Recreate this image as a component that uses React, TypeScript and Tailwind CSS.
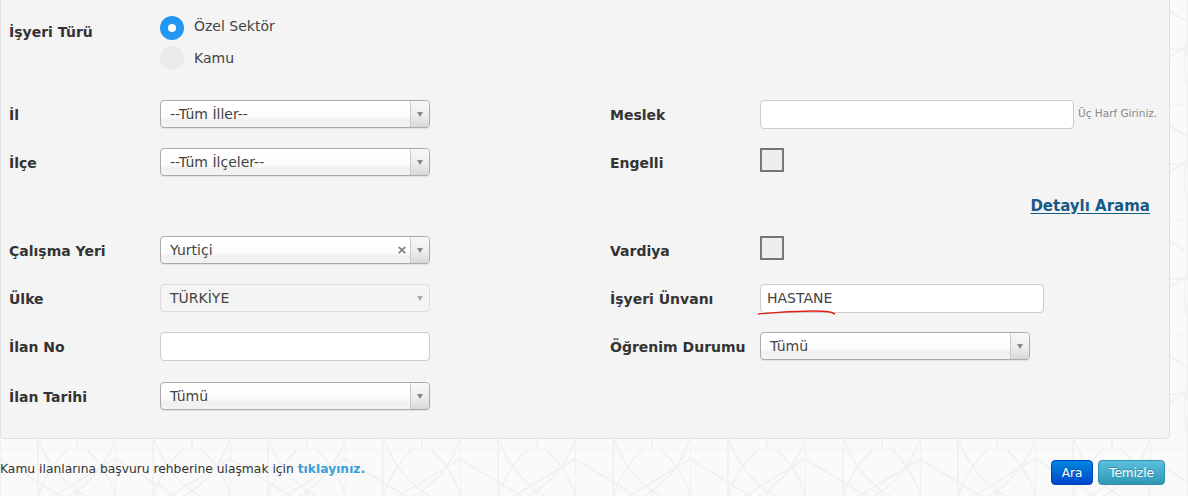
import React from "react";

const LABEL = "text-[14px] font-bold text-[#333] pt-[2px]";

function Arrow({ light }: { light?: boolean }) {
  return light ? (
    <span className="block h-0 w-0 border-x-[3.5px] border-t-[5px] border-x-transparent border-t-[#aaa]" />
  ) : (
    <span className="block h-0 w-0 border-x-[3.5px] border-t-[5px] border-x-transparent border-t-[#888]" />
  );
}

function Select({ value, wClass, clear }: { value: string; wClass: string; clear?: boolean }) {
  return (
    <div
      className={
        wClass +
        " flex h-[28px] shrink-0 items-stretch overflow-hidden rounded-[4px] border border-[#aaa] bg-[linear-gradient(#fff_20%,#fbfbfb_60%,#f0f0f0_75%,#f4f4f4_100%)] shadow-[0_1px_1px_rgba(0,0,0,0.08)]"
      }
    >
      <div className="flex flex-1 items-center pl-[9px] text-[14px] text-[#444]">{value}</div>
      {clear ? (
        <div className="flex w-[16px] items-center justify-center text-[13px] font-bold text-[#777]">×</div>
      ) : null}
      <div className="flex w-[19px] items-center justify-center border-l border-[#c8c8c8] bg-[linear-gradient(#f8f8f8_0%,#eee_55%,#d8d8d8_100%)]">
        <Arrow />
      </div>
    </div>
  );
}

function DisabledSelect({ value, wClass }: { value: string; wClass: string }) {
  return (
    <div className={wClass + " flex h-[28px] shrink-0 items-center rounded-[4px] border border-[#dcdcdc] bg-[#f4f4f4]"}>
      <div className="flex flex-1 items-center pl-[9px] text-[14px] text-[#444]">{value}</div>
      <div className="flex w-[19px] items-center justify-center">
        <Arrow light />
      </div>
    </div>
  );
}

function TextInput({ wClass, value }: { wClass: string; value?: string }) {
  return (
    <div className={wClass + " flex h-[29px] shrink-0 items-center rounded-[4px] border border-[#ccc] bg-white pl-[6px] text-[14px] text-[#444]"}>
      {value}
    </div>
  );
}

function Checkbox() {
  return <div className="mb-[5px] h-[24px] w-[24px] shrink-0 border-2 border-[#777] bg-[#eee]" />;
}

function Row({ h, left, right }: { h: string; left?: React.ReactNode; right?: React.ReactNode }) {
  return (
    <div className={h + " flex items-center"}>
      <div className="flex w-[601px] shrink-0 items-center">{left}</div>
      <div className="flex flex-1 items-center">{right}</div>
    </div>
  );
}

function LeftField({ label, children }: { label: string; children: React.ReactNode }) {
  return (
    <>
      <div className={"w-[151px] shrink-0 " + LABEL}>{label}</div>
      {children}
    </>
  );
}

function RightField({ label, children }: { label: string; children: React.ReactNode }) {
  return (
    <>
      <div className={"w-[150px] shrink-0 " + LABEL}>{label}</div>
      {children}
    </>
  );
}

export default function App() {
  return (
    <div className="relative h-[496px] w-[1188px] overflow-hidden bg-[#fafafa] font-['DejaVu_Sans',sans-serif]">
      <svg className="absolute inset-0 h-full w-full" aria-hidden="true">
        <defs>
          <pattern id="bgp" width="115" height="115" patternUnits="userSpaceOnUse" x="0" y="104">
            <g fill="none" stroke="#f0f0f0" strokeWidth="1.6">
              <line x1="0" y1="0" x2="115" y2="0" />
              <line x1="0" y1="0" x2="0" y2="115" />
              <line x1="38" y1="0" x2="38" y2="115" />
              <line x1="77" y1="40" x2="77" y2="115" />
              <circle cx="19.5" cy="-40" r="100" />
              <circle cx="134.5" cy="-40" r="100" />
              <circle cx="-95.5" cy="-40" r="100" />
              <circle cx="19.5" cy="75" r="100" />
              <circle cx="134.5" cy="75" r="100" />
              <circle cx="-95.5" cy="75" r="100" />
              <line x1="0" y1="10" x2="115" y2="80" />
              <line x1="0" y1="80" x2="115" y2="10" />
            </g>
          </pattern>
        </defs>
        <rect width="100%" height="100%" fill="url(#bgp)" />
      </svg>

      <div className="relative w-[1170px]">
        <div className="rounded-b-[4px] border-x border-b border-[#e0e0e0] bg-[#f4f4f4] pb-[16px] pl-[8px] pr-[19px] pt-[16px]">
          <div className="flex">
            <div className="w-[151px] pt-[6px] text-[14px] font-bold text-[#333]">İşyeri Türü</div>
            <div className="flex flex-col gap-[6px]">
              <div className="flex h-[24px] items-center">
                <div className="flex h-[24px] w-[24px] items-center justify-center rounded-full bg-[#2196f3]">
                  <div className="h-[8px] w-[8px] rounded-full bg-white" />
                </div>
                <span className="ml-[10px] -translate-y-[2px] text-[14px] text-[#444]">Özel Sektör</span>
              </div>
              <div className="flex h-[24px] items-center">
                <div className="h-[24px] w-[24px] rounded-full bg-[#eaeaea]" />
                <span className="ml-[10px] text-[14px] text-[#444]">Kamu</span>
              </div>
            </div>
          </div>

          <div className="mt-[20px]">
            <Row
              h="h-[48px]"
              left={
                <LeftField label="İl">
                  <Select value="--Tüm İller--" wClass="w-[270px]" />
                </LeftField>
              }
              right={
                <RightField label="Meslek">
                  <TextInput wClass="w-[314px]" />
                  <span className="ml-[4px] whitespace-nowrap text-[10.5px] text-[#888]">Üç Harf Giriniz.</span>
                </RightField>
              }
            />
            <Row
              h="h-[48px]"
              left={
                <LeftField label="İlçe">
                  <Select value="--Tüm İlçeler--" wClass="w-[270px]" />
                </LeftField>
              }
              right={
                <RightField label="Engelli">
                  <Checkbox />
                </RightField>
              }
            />
            <Row
              h="h-[40px]"
              right={
                <div className="flex flex-1 justify-end">
                  <a className="text-[15px] font-bold text-[#175a87] underline underline-offset-[2px]" href="#">
                    Detaylı Arama
                  </a>
                </div>
              }
            />
            <Row
              h="h-[48px]"
              left={
                <LeftField label="Çalışma Yeri">
                  <Select value="Yurtiçi" wClass="w-[270px]" clear />
                </LeftField>
              }
              right={
                <RightField label="Vardiya">
                  <Checkbox />
                </RightField>
              }
            />
            <Row
              h="h-[48px]"
              left={
                <LeftField label="Ülke">
                  <DisabledSelect value="TÜRKİYE" wClass="w-[270px]" />
                </LeftField>
              }
              right={
                <RightField label="İşyeri Ünvanı">
                  <div className="relative">
                    <TextInput wClass="w-[284px]" value="HASTANE" />
                    <svg className="absolute left-[-3px] top-[24px]" width="80" height="8" viewBox="0 0 80 8" aria-hidden="true">
                      <path d="M1 6 C 20 4, 40 3, 56 3 S 74 4, 78 6" fill="none" stroke="#e0201b" strokeWidth="1.4" />
                    </svg>
                  </div>
                </RightField>
              }
            />
            <Row
              h="h-[48px]"
              left={
                <LeftField label="İlan No">
                  <TextInput wClass="w-[270px]" />
                </LeftField>
              }
              right={
                <RightField label="Öğrenim Durumu">
                  <Select value="Tümü" wClass="w-[270px]" />
                </RightField>
              }
            />
            <Row
              h="h-[52px]"
              left={
                <LeftField label="İlan Tarihi">
                  <Select value="Tümü" wClass="w-[270px]" />
                </LeftField>
              }
            />
          </div>
        </div>

        <div className="flex items-start justify-between pr-[5px] pt-[21px]">
          <div className="pt-[1px] text-[12.3px] leading-[17px] text-[#333]">
            Kamu ilanlarına başvuru rehberine ulaşmak için{" "}
            <a href="#" className="font-bold text-[#3a9fd6]">
              tıklayınız.
            </a>
          </div>
          <div className="flex gap-[5px]">
            <button className="h-[25px] w-[42px] rounded-[4px] border border-[#0044bb] bg-[linear-gradient(#0088dd,#0044cc)] text-[12px] text-white [text-shadow:0_-1px_0_rgba(0,0,0,0.25)]">
              Ara
            </button>
            <button className="h-[25px] w-[67px] rounded-[4px] border border-[#2f8fb0] bg-[linear-gradient(#5bc0de,#2f96b4)] text-[12px] text-white [text-shadow:0_-1px_0_rgba(0,0,0,0.25)]">
              Temizle
            </button>
          </div>
        </div>
      </div>
    </div>
  );
}
